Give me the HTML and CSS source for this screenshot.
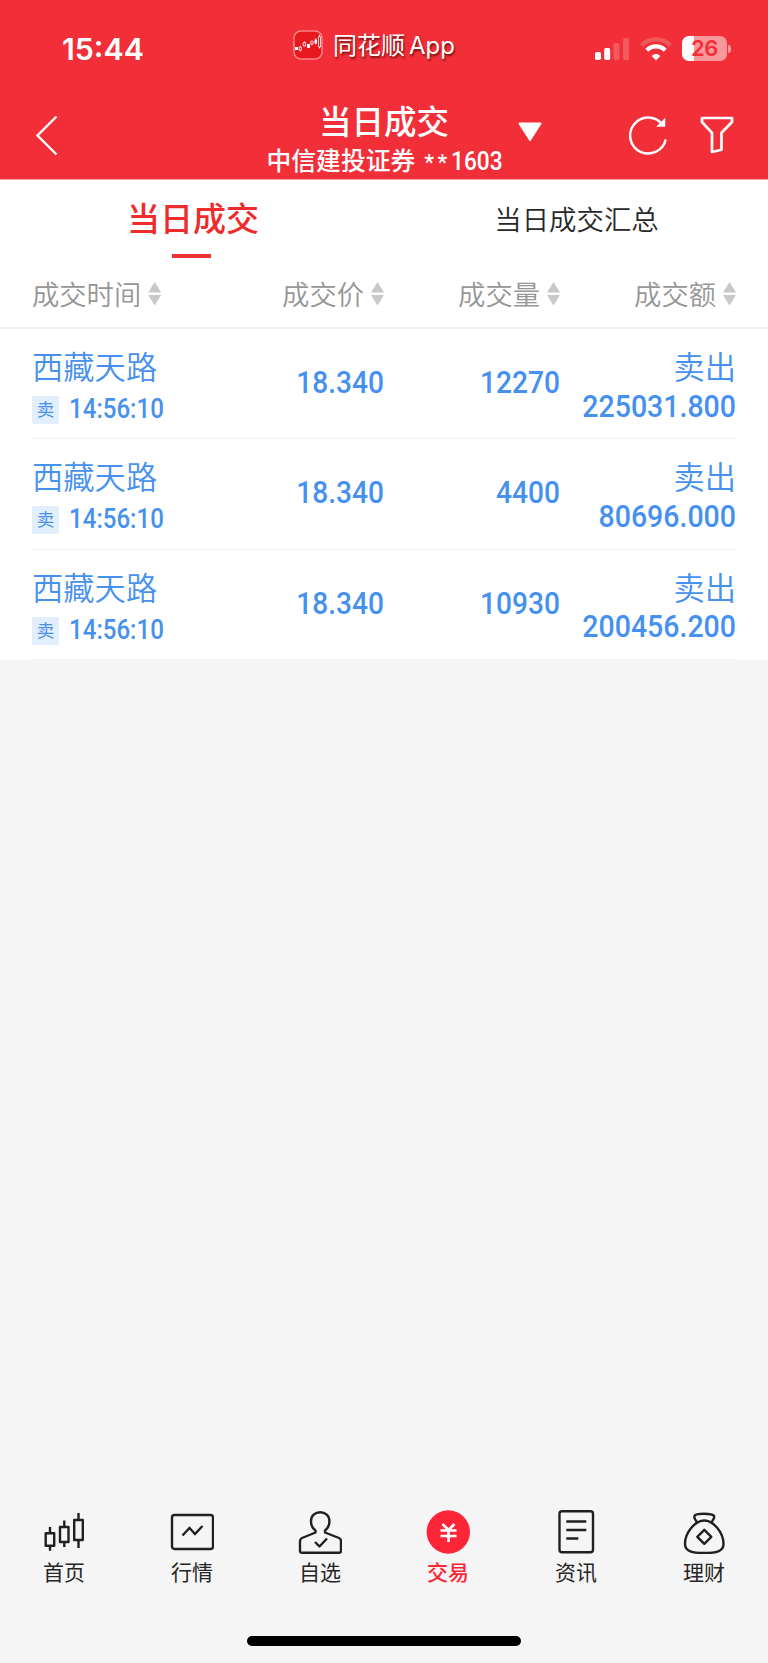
FILE: index.html
```html
<!DOCTYPE html>
<html lang="zh-CN">
<head>
<meta charset="utf-8">
<title>当日成交</title>
<link rel="stylesheet" href="styles.css">
</head>
<body>
<div class="app">
  <header class="header">
    <div class="status">
      <span class="clock">15:44</span>
      <span class="brand">
        <svg class="brand-icon" width="30" height="30" viewBox="0 0 30 30"><rect x="1" y="1" width="28" height="28" rx="7" fill="#e8191e" stroke="#f88286" stroke-width="1.5"/><g fill="#fff"><path d="M2 17h3v3H2zM14 14h3v4h-3zM21.5 9.500h2.500v4h-2.500z"/></g><g fill="none" stroke="#fff" stroke-width=".8"><path d="M6.200 17.200h2.200v3H6.200zM7.300 15.800v1.400M7.300 20.200v1.500M10.200 12.600h2.400v3.400h-2.400zM11.400 11.200v1.400M17.800 11.200h2.200v2.800h-2.200zM18.900 14v1.500M22.700 8v6.500M25.500 6.500h2v10.500h-2zM26.500 4.500v2M26.500 17v1.500"/></g></svg>
        <span class="brand-name">同花顺<span class="brand-app">App</span></span>
      </span>
      <span class="indicators">
        <svg width="34" height="24" viewBox="0 0 34 24" fill="#fff"><rect x="0" y="15" width="6" height="8" rx="1.800"/><rect x="9.200" y="11" width="6" height="12" rx="1.800"/><g opacity=".2"><rect x="18.500" y="6" width="6" height="17" rx="1.800"/><rect x="28" y="1" width="6" height="22" rx="1.800"/></g></svg>
        <svg class="wifi" width="32" height="24" viewBox="0 0 32 24" fill="none" stroke="#fff" stroke-width="4.200"><path d="M1.500 8.400A20.500 20.500 0 0 1 30.500 8.400" opacity=".2"/><path d="M6.800 13.200A13.200 13.200 0 0 1 25.200 13.200"/><path d="M16 23.300l-4.400-4.400a6.300 6.300 0 0 1 8.800 0z" fill="#fff" stroke="none"/></svg>
        <span class="battery"><span class="battery-body">26</span><span class="battery-cap"></span></span>
      </span>
    </div>
    <div class="bar">
      <svg class="back" width="24" height="42" viewBox="0 0 24 42" fill="none" stroke="#fff" stroke-width="2.400"><path d="M21.500 2.500L2.500 21.500l19 19"/></svg>
      <div class="heading">
        <h1 class="title">当日成交</h1>
        <p class="account">中信建投证券<span class="stars">**</span><span class="acct-no">1603</span></p>
      </div>
      <svg class="drop" width="24" height="20" viewBox="0 0 24 20"><path d="M1.500 1.500h21L12 18z" fill="#fff" stroke="#fff" stroke-width="2" stroke-linejoin="round"/></svg>
      <svg class="refresh" width="40" height="40" viewBox="0 0 40 40" fill="none" stroke="#fff" stroke-width="2.500"><path d="M36.700 23.500A18 18 0 1 1 33 8"/><path d="M29 10h6.500V3.500z" fill="#fff" stroke-width="1.500"/></svg>
      <svg class="filter" width="34" height="38" viewBox="0 0 34 38" fill="none" stroke="#fff" stroke-width="2.700" stroke-linejoin="round"><path d="M2 2h30v4L21.500 16.800v17L12 36V16.800L2 6z"/></svg>
    </div>
  </header>

  <main class="sheet">
    <nav class="tabs">
      <a class="tab tab-on">当日成交</a>
      <a class="tab">当日成交汇总</a>
    </nav>
    <div class="cols thead">
      <span class="th">成交时间<i class="sort"></i></span>
      <span class="th">成交价<i class="sort"></i></span>
      <span class="th">成交量<i class="sort"></i></span>
      <span class="th">成交额<i class="sort"></i></span>
    </div>
    <section class="rows">
      <article class="cols row">
        <div class="stock"><b class="name">西藏天路</b><span class="when"><i class="badge">卖</i><span class="time">14:56:10</span></span></div>
        <span class="num">18.340</span>
        <span class="num">12270</span>
        <div class="amount"><b class="name">卖出</b><span class="num">225031.800</span></div>
      </article>
      <article class="cols row">
        <div class="stock"><b class="name">西藏天路</b><span class="when"><i class="badge">卖</i><span class="time">14:56:10</span></span></div>
        <span class="num">18.340</span>
        <span class="num">4400</span>
        <div class="amount"><b class="name">卖出</b><span class="num">80696.000</span></div>
      </article>
      <article class="cols row">
        <div class="stock"><b class="name">西藏天路</b><span class="when"><i class="badge">卖</i><span class="time">14:56:10</span></span></div>
        <span class="num">18.340</span>
        <span class="num">10930</span>
        <div class="amount"><b class="name">卖出</b><span class="num">200456.200</span></div>
      </article>
    </section>
  </main>

  <footer class="dock">
    <a class="item"><svg width="44" height="44" viewBox="0 0 44 44" fill="none" stroke="#202020" stroke-width="2.400" stroke-linejoin="round"><path d="M3.700 23.300h8.500v12.500H3.700zM8 17v6.300M8 35.800v5M18 17h8.500v15H18zM22.300 10.500V17M22.300 32v5M32.200 10h8.600v20h-8.600zM36.500 3v7M36.500 30v8"/></svg><span>首页</span></a>
    <a class="item"><svg width="44" height="44" viewBox="0 0 44 44" fill="none" stroke="#202020" stroke-width="2.400"><rect x="2" y="5" width="41" height="34" rx="2.500"/><path d="M12.500 25.500l7-7.500 5.500 6 7.500-8"/></svg><span>行情</span></a>
    <a class="item"><svg width="44" height="44" viewBox="0 0 44 44" fill="none" stroke="#202020" stroke-width="2.400" stroke-linejoin="round"><path d="M17.500 22.500V20.500Q13 17.500 13 11C13 5.500 17 2.300 22.200 2.300S31.400 5.500 31.400 11Q31.400 17.500 27 20.500v2l14 5.500q2 1 2 3v10q0 1.800-2 1.800H4q-2 0-2-1.800V31q0-2 2-3z"/><path d="M17 32l4.500 4.500 7.500-8"/></svg><span>自选</span></a>
    <a class="item item-on"><svg width="44" height="44" viewBox="0 0 44 44"><circle cx="22.300" cy="22" r="21.700" fill="#fd2638"/><path d="M16.500 14l6 6 6-6M14.500 20.500h16M14.500 26h16M22.500 20v12" fill="none" stroke="#fff" stroke-width="2.700"/></svg><span>交易</span></a>
    <a class="item"><svg width="44" height="44" viewBox="0 0 44 44" fill="none" stroke="#202020" stroke-width="2.400"><rect x="5.500" y="1.300" width="33.500" height="41" rx="2.500"/><path d="M12.300 11.500h20M12.300 20h20M12.300 28.500h12"/></svg><span>资讯</span></a>
    <a class="item"><svg width="44" height="44" viewBox="0 0 44 44" fill="none" stroke="#202020" stroke-width="2.400" stroke-linejoin="round"><path d="M15 12.500C13.500 9 11.500 8.200 12.500 5.800C14 3 30 3 32 5.800C33 8.200 31 9 29.500 12.500"/><path d="M22.300 10.500C31 10.500 41.500 22 41.500 34C41.500 41.500 34 43 22.300 43S3 41.500 3 34C3 22 13.500 10.500 22.300 10.500z"/><path d="M22.300 19.800l7 7-7 7-7-7z"/></svg><span>理财</span></a>
  </footer>
  <div class="home-bar"></div>
</div>
</body>
</html>
```
FILE: styles.css
```css
* { box-sizing: border-box; }
body {
  margin: 0;
  background: #f5f5f5;
  font-family: "Noto Sans CJK SC", sans-serif;
}
h1, p { margin: 0; font-weight: 500; }
b, i { font-weight: 400; font-style: normal; }
svg { display: block; flex: none; }
.app {
  width: 768px;
  height: 1663px;
  display: flex;
  flex-direction: column;
}

/* header */
.header {
  height: 180px;
  background: #f22f38;
  border-bottom: 1px solid #f8a0a4;
  color: #fff;
}
.status {
  height: 98px;
  display: grid;
  grid-template-columns: 293px 302px 1fr;
}
.clock {
  padding: 31px 0 0 62px;
  font: 600 30.300px/36px Inter, sans-serif;
}
.brand { display: flex; padding-top: 30px; }
.brand-name {
  margin-left: 10px;
  font-size: 24px;
  line-height: 27px;
  white-space: nowrap;
  text-shadow: 1px 2px 2px rgba(70, 0, 0, .7);
}
.brand-app {
  margin-left: 4px;
  font: 400 24px/27px Inter, sans-serif;
}
.indicators { display: flex; padding-top: 37px; }
.wifi { margin-left: 11px; }
.battery { display: flex; align-items: center; height: 25px; margin: -1px 0 0 10px; }
.battery-body {
  width: 45px;
  height: 25px;
  border-radius: 7px;
  background: linear-gradient(90deg, #fff 12px, #fa979b 12px);
  color: #f22f38;
  font: 600 22px/25px Inter, sans-serif;
  letter-spacing: -.5px;
  text-align: center;
}
.battery-cap { width: 3px; height: 8px; margin-left: 1px; border-radius: 0 3px 3px 0; background: #fa979b; }
.bar {
  height: 81px;
  display: grid;
  grid-template-columns: 225px 293px 24px 1fr 40px 31px 34px 34px;
}
.back { margin: 16px 0 0 35px; }
.heading { grid-column: 2; margin-left: 19px; }
.title { width: 280px; font-size: 32.500px; line-height: 36px; margin-top: 4px; text-align: center; }
.account {
  display: flex;
  font-size: 24.800px;
  line-height: 30px;
  margin-top: 6px;
  padding-left: 22.500px;
  white-space: nowrap;
}
.stars { width: 27px; margin-left: 9px; font: 500 22px/37px Roboto, sans-serif; letter-spacing: 3.500px; }
.acct-no {
  font: 500 25.500px/34px Roboto, sans-serif;
  transform: scaleX(.89);
  transform-origin: 0 50%;
}
.drop { grid-column: 3; margin-top: 24px; }
.refresh { grid-column: 5; margin-top: 18px; }
.filter { grid-column: 7; margin-top: 18px; }

/* tabs */
.sheet { height: 480px; background: #fff; }
.tabs { height: 81px; display: grid; grid-template-columns: 1fr 1fr; }
.tab {
  position: relative;
  text-align: center;
  font-size: 27.400px;
  font-weight: 350;
  line-height: 40px;
  padding-top: 18px;
  padding-left: 1px;
  color: #282828;
}
.tab-on { font-size: 33px; font-weight: 500; color: #ee2c2e; padding-top: 17px; padding-left: 2px; }
.tab-on::after {
  content: "";
  position: absolute;
  left: 172px;
  top: 74px;
  width: 39px;
  height: 4px;
  background: #ee3033;
}

/* table */
.cols {
  display: grid;
  grid-template-columns: 176px 176px 176px 176px;
  margin: 0 32px;
}
.thead { height: 68px; margin: 0; padding: 0 32px; border-bottom: 2px solid #f0f0f0; color: #969696; }
.th {
  display: flex;
  justify-content: flex-end;
  font-size: 27.300px;
  font-weight: 350;
  line-height: 40px;
  padding-top: 12px;
}
.th:first-child { justify-content: flex-start; }
.sort { width: 13px; margin: 9px 0 0 7px; }
.sort::before, .sort::after { content: ""; display: block; width: 13px; height: 10.500px; background: #c8c8c8; clip-path: polygon(50% 0, 100% 100%, 0 100%); }
.sort::after { margin-top: 2.500px; clip-path: polygon(0 0, 100% 0, 50% 100%); }
.row { height: 110.300px; border-bottom: 1px solid #f2f2f2; color: #4691ee; }
.name { display: block; font-size: 31.300px; font-weight: 350; line-height: 40px; white-space: nowrap; }
.stock { padding-top: 17px; }
.when { display: flex; margin-top: 10px; }
.badge {
  width: 27px;
  height: 28px;
  border-radius: 2px;
  background: #e2eefb;
  font-size: 17.500px;
  line-height: 26px;
  text-align: center;
}
.time {
  margin-left: 10px;
  font: 500 27.700px/26px Roboto, sans-serif;
  transform: scaleX(.87);
  transform-origin: 0 50%;
}
.num {
  padding-top: 34px;
  text-align: right;
  font: 500 31.800px/38px Roboto, sans-serif;
  transform: scaleX(.885);
  transform-origin: 100% 50%;
}
.amount { padding-top: 17px; text-align: right; }
.amount .num { display: block; padding-top: 0; margin-top: .5px; transform: scaleX(.896); }

/* dock */
.dock {
  margin-top: auto;
  height: 126px;
  display: grid;
  grid-template-columns: repeat(6, 1fr);
}
.item {
  display: flex;
  flex-direction: column;
  align-items: center;
  font-size: 21px;
  line-height: 28px;
  color: #262626;
}
.item span { margin-top: 3px; }
.item-on { color: #fd2638; font-weight: 500; }
.home-bar { width: 274px; height: 10px; margin: 0 auto 17px; border-radius: 5px; background: #000; }
```
